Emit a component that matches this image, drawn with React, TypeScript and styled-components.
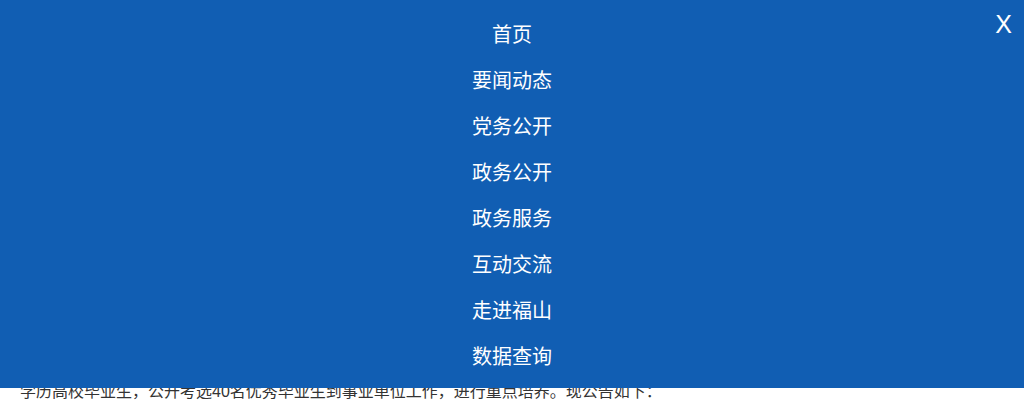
import styled, { createGlobalStyle } from 'styled-components';

const GlobalStyle = createGlobalStyle`
  html, body {
    margin: 0;
    padding: 0;
    background: #fff;
    font-family: "Liberation Sans", "Noto Sans CJK SC", sans-serif;
  }
`;

const NAV_ITEMS = ['首页', '要闻动态', '党务公开', '政务公开', '政务服务', '互动交流', '走进福山', '数据查询'];

const Page = styled.div`
  position: relative;
  width: 1024px;
  height: 400px;
  overflow: hidden;
`;

const Article = styled.article`
  padding: 378px 20px 0;
`;

const Paragraph = styled.p`
  margin: 0;
  font-size: 16px;
  line-height: 28px;
  color: #333;
`;

const Overlay = styled.nav`
  position: absolute;
  top: 0;
  left: 0;
  width: 100%;
  background-color: #115eb3;
  padding: 12px 0 8px;
  z-index: 100;
`;

const Menu = styled.ul`
  list-style: none;
  margin: 0;
  padding: 0;
  display: flex;
  flex-direction: column;
  align-items: center;
`;

const MenuItem = styled.li`
  height: 46px;
  line-height: 46px;
  font-size: 20px;
  color: #fff;
  text-align: center;
`;

const CloseButton = styled.button`
  position: absolute;
  top: 9px;
  right: 12px;
  border: none;
  background: none;
  padding: 0;
  color: #fff;
  font-family: "Liberation Sans", sans-serif;
  font-size: 25px;
  line-height: 30px;
  cursor: pointer;
`;

export default function App() {
  return (
    <Page>
      <GlobalStyle />
      <Article>
        <Paragraph>学历高校毕业生，公开考选40名优秀毕业生到事业单位工作，进行重点培养。现公告如下：</Paragraph>
      </Article>
      <Overlay>
        <Menu>
          {NAV_ITEMS.map((item) => (
            <MenuItem key={item}>{item}</MenuItem>
          ))}
        </Menu>
        <CloseButton>X</CloseButton>
      </Overlay>
    </Page>
  );
}
